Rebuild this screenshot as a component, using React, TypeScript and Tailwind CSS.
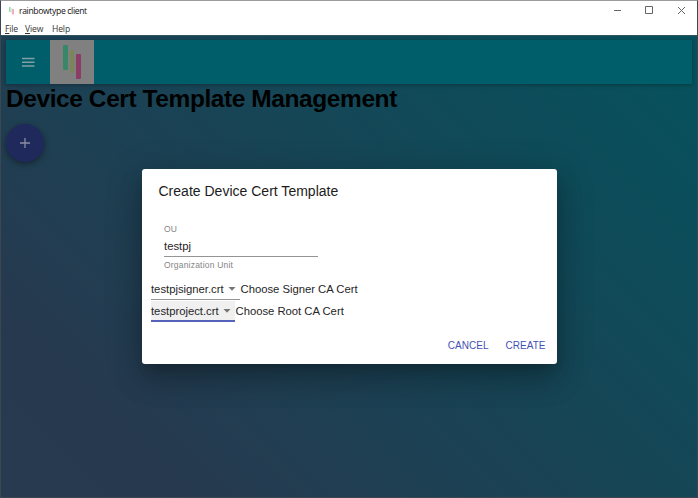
import React from "react";

const arial = "font-['Liberation_Sans',Arial,sans-serif]";

function TitleBar() {
  return (
    <div className="flex h-[20px] items-center bg-white">
      <svg width="8" height="8" viewBox="0 0 8 8" className="ml-[7px] shrink-0">
        <rect x="1" y="0" width="1.6" height="5" fill="#8fe0b8" />
        <rect x="3" y="1" width="1.3" height="5" fill="#e8edc4" />
        <rect x="4.2" y="2" width="1.7" height="5.5" fill="#f09fc4" />
      </svg>
      <span className="ml-[3px] text-[8.6px] leading-[20px] tracking-[-0.35px] text-[#111]">rainbowtype client</span>
      <svg width="84" height="20" viewBox="0 0 84 20" fill="none" stroke="#666" strokeWidth="1" className="ml-auto mr-[5px]">
        <path d="M6 9.5h7M37.5 5.5h7v7h-7zM70 6l7 7M77 6l-7 7" />
      </svg>
    </div>
  );
}

function MenuBar() {
  return (
    <div className="flex h-[14px] items-center bg-white pl-1 pt-px text-[8.6px] leading-[12px] tracking-[-0.15px] text-[#333]">
      <span className="w-[20px]"><span className="underline">F</span>ile</span>
      <span className="w-[27px]"><span className="underline">V</span>iew</span>
      <span>Help</span>
    </div>
  );
}

function AppBar() {
  return (
    <header className="flex h-[44px] shrink-0 items-center bg-[#005e6a] shadow-[0_1px_4px_rgba(0,0,0,0.3)]">
      <svg width="14" height="10" viewBox="0 0 14 10" stroke="#809fa3" strokeWidth="1.5" className="ml-[15px]">
        <path d="M1 1.4h12.5M1 5.2h12.5M1 9h12.5" />
      </svg>
      <div className="ml-[15px] flex h-[44px] w-[44px] items-center justify-center bg-[#808080]">
        <svg width="44" height="44" viewBox="0 0 44 44">
          <rect x="13" y="5" width="5" height="25" rx="1" fill="#388768" />
          <rect x="20" y="10" width="4" height="23" rx="1" fill="#7b8658" />
          <rect x="26" y="14" width="5" height="25" rx="1" fill="#8b3d65" />
        </svg>
      </div>
    </header>
  );
}

function Select({ value, active }: { value: string; active?: boolean }) {
  return (
    <span
      className={
        active
          ? "flex h-[21px] w-[84px] items-center border-b-2 border-[#5463b9] bg-[#f0f0f0]"
          : "flex h-[21px] w-[89px] items-center border-b border-[#949494]"
      }
    >
      <span className="tracking-[-0.02px]">{value}</span>
      <svg width="8" height="4" viewBox="0 0 8 4" className="ml-auto mr-1">
        <path d="M.5 0h7L4 3.7z" fill="#757575" />
      </svg>
    </span>
  );
}

function CertDialog() {
  return (
    <section className="absolute left-[142px] top-[169px] flex h-[194.5px] w-[414.5px] flex-col rounded-[3px] bg-white text-[11.3px] text-[#262626] shadow-[0_8px_12px_-5px_rgba(0,0,0,0.2),0_18px_28px_2px_rgba(0,0,0,0.14),0_7px_34px_6px_rgba(0,0,0,0.14)]">
      <h2 className="mt-[12px] pl-[16.5px] text-[14px] leading-[20px] tracking-[0.01px] text-[#1c1c1c]">Create Device Cert Template</h2>
      <div className="ml-[22px] mt-[23px] w-[154px]">
        <div className="text-[8.5px] leading-[11px] tracking-[0.08px] text-[#858585]">OU</div>
        <div className="mt-[4px] h-[18px] border-b border-[#949494] leading-[14px]">testpj</div>
        <div className="mt-[3px] text-[8.5px] leading-[11px] tracking-[0.2px] text-[#858585]">Organization Unit</div>
      </div>
      <div className="ml-[9px] mt-[8px] flex h-[22px] items-start leading-[20px]">
        <Select value="testpjsigner.crt" />
        <span className="pl-[0.5px] tracking-[-0.02px]">Choose Signer CA Cert</span>
      </div>
      <div className="ml-[9px] flex h-[22px] items-start leading-[20px]">
        <Select value="testproject.crt" active />
        <span className="pl-[0.5px] tracking-[-0.02px]">Choose Root CA Cert</span>
      </div>
      <div className="mb-[11px] mr-[11px] mt-auto flex justify-end gap-[17px] text-[10px] leading-[14px] tracking-[0.03px] text-[#3f51b5]">
        <button>CANCEL</button>
        <button>CREATE</button>
      </div>
    </section>
  );
}

export default function App() {
  return (
    <div className={`relative flex h-[498px] w-[698px] flex-col overflow-hidden border-b border-l border-r border-[#3b4652] border-t border-t-[#9c9c9c] ${arial}`}>
      <div className="bg-white font-['Open_Sans','Noto_Sans',sans-serif]">
        <TitleBar />
        <MenuBar />
      </div>
      <main className="flex flex-1 flex-col border-t border-[#31545e] bg-[linear-gradient(45deg,#283a50_5%,#27394f_15%,#174556_55%,#07515c_95%)] px-[5px] pt-[4px]">
        <AppBar />
        <h1 className="mt-px whitespace-nowrap text-[24.5px] font-bold leading-[28px] tracking-[-0.42px] text-black">Device Cert Template Management</h1>
        <button className="mt-[11px] flex h-[38px] w-[38px] items-center justify-center rounded-full bg-[#20295c] shadow-[0_2px_6px_rgba(0,0,0,0.4)]">
          <svg width="10" height="10" viewBox="0 0 10 10" stroke="#8b8da2" strokeWidth="1.3">
            <path d="M5 0v10M0 5h10" />
          </svg>
        </button>
      </main>
      <div className="absolute -left-px -top-px"><CertDialog /></div>
    </div>
  );
}
